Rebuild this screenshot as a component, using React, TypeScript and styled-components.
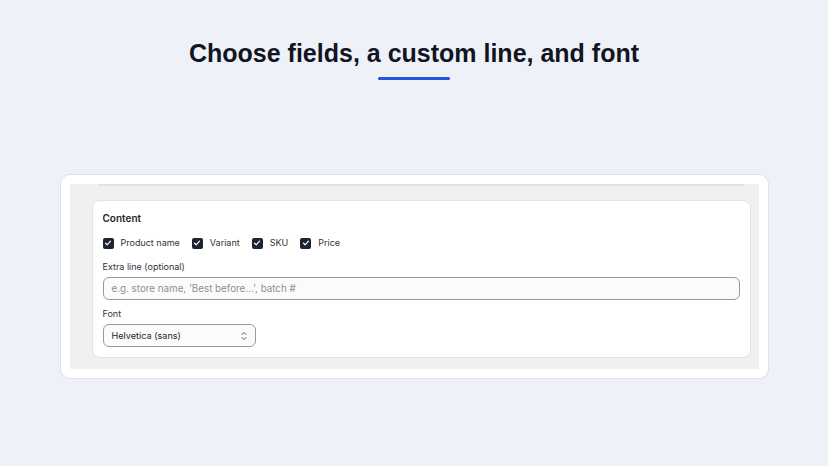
import React from "react";
import styled, { createGlobalStyle } from "styled-components";

const Global = createGlobalStyle`
  html, body { margin: 0; padding: 0; background: #eef1f8; }
  body { font-family: Inter, "Liberation Sans", Arial, sans-serif; }
  * { box-sizing: border-box; }
`;

const Page = styled.div`
  width: 828px;
  height: 466px;
  display: flex;
  flex-direction: column;
  align-items: center;
  padding-top: 38px;
`;

const Title = styled.h1`
  margin: 0;
  font-family: "Liberation Sans", Arial, sans-serif;
  font-weight: 700;
  font-size: 25px;
  line-height: 30px;
  color: #111522;
`;

const Accent = styled.div`
  width: 72px;
  height: 3px;
  border-radius: 2px;
  background: #2453dc;
  margin-top: 9px;
`;

const Frame = styled.div`
  margin-top: 94px;
  width: 709px;
  background: #fff;
  border: 1px solid #dde1ea;
  border-radius: 10px;
  padding: 9px;
`;

const Canvas = styled.div`
  background: #f0f0f0;
  padding: 0 8px 11px 22px;
  display: flex;
  flex-direction: column;
`;

const TopRule = styled.div`
  height: 2px;
  background: #e3e3e3;
  margin: 0 6px 14px 6px;
`;

const Card = styled.div`
  background: #fff;
  border: 1px solid #e3e3e3;
  border-radius: 8px;
  padding: 10px;
  display: flex;
  flex-direction: column;
`;

const SectionTitle = styled.div`
  font-size: 10px;
  font-weight: 600;
  color: #1f1f1f;
  line-height: 14px;
`;

const CheckRow = styled.div`
  display: flex;
  align-items: center;
  gap: 12px;
  margin-top: 11px;
`;

const CheckItem = styled.label`
  display: flex;
  align-items: center;
  gap: 7px;
  font-size: 9px;
  color: #333;
  line-height: 14px;
`;

const Box = styled.span`
  width: 11px;
  height: 11px;
  border-radius: 2px;
  background: #1d2330;
  display: inline-flex;
  align-items: center;
  justify-content: center;
`;

const FieldLabel = styled.div<{ $mt: number }>`
  font-size: 9px;
  color: #333;
  line-height: 14px;
  margin-top: ${(p) => p.$mt}px;
`;

const TextInput = styled.div`
  margin-top: 3px;
  height: 23px;
  border: 1px solid #9a9a9a;
  border-radius: 6px;
  background: #fbfbfb;
  display: flex;
  align-items: center;
  padding: 0 8px;
  font-size: 9.8px;
  color: #8f8f8f;
`;

const Select = styled.div`
  margin-top: 3px;
  width: 153px;
  height: 23px;
  border: 1px solid #9a9a9a;
  border-radius: 6px;
  background: #fbfbfb;
  display: flex;
  align-items: center;
  justify-content: space-between;
  padding: 0 7px 0 8px;
  font-size: 9.1px;
  color: #222;
`;

const Check = () => (
  <Box>
    <svg width="8" height="8" viewBox="0 0 8 8">
      <path d="M1.5 4.2 L3.2 5.8 L6.5 2.2" fill="none" stroke="#fff" strokeWidth="1.2" strokeLinecap="round" strokeLinejoin="round" />
    </svg>
  </Box>
);

const Chevrons = () => (
  <svg width="8" height="10" viewBox="0 0 8 10">
    <path d="M2 3.5 L4 1.5 L6 3.5 M2 6.5 L4 8.5 L6 6.5" fill="none" stroke="#555" strokeWidth="1" strokeLinecap="round" strokeLinejoin="round" />
  </svg>
);

export default function App() {
  const fields = ["Product name", "Variant", "SKU", "Price"];
  return (
    <>
      <Global />
      <Page>
        <Title>Choose fields, a custom line, and font</Title>
        <Accent />
        <Frame>
          <Canvas>
            <TopRule />
            <Card>
              <SectionTitle>Content</SectionTitle>
              <CheckRow>
                {fields.map((f) => (
                  <CheckItem key={f}>
                    <Check />
                    {f}
                  </CheckItem>
                ))}
              </CheckRow>
              <FieldLabel $mt={10}>Extra line (optional)</FieldLabel>
              <TextInput>e.g. store name, 'Best before...', batch #</TextInput>
              <FieldLabel $mt={7}>Font</FieldLabel>
              <Select>
                <span>Helvetica (sans)</span>
                <Chevrons />
              </Select>
            </Card>
          </Canvas>
        </Frame>
      </Page>
    </>
  );
}
